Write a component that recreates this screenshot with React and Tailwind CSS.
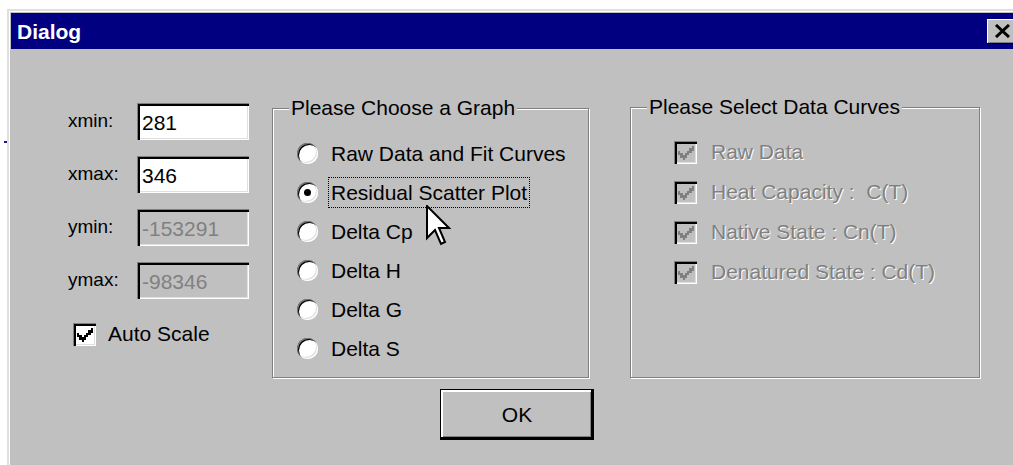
import React from "react";

const sunken =
  "shadow-[inset_1px_1px_0_#808080,inset_3px_3px_0_#000,inset_-1px_-1px_0_#fff,inset_-2px_-2px_0_#dfdfdf]";

const graphs = [
  "Raw Data and Fit Curves",
  "Residual Scatter Plot",
  "Delta Cp",
  "Delta H",
  "Delta G",
  "Delta S",
];

const curves = [
  "Raw Data",
  "Heat Capacity :\u00a0\u00a0C(T)",
  "Native State : Cn(T)",
  "Denatured State : Cd(T)",
];

const ranges = [
  { label: "xmin:", value: "281", disabled: false },
  { label: "xmax:", value: "346", disabled: false },
  { label: "ymin:", value: "-153291", disabled: true },
  { label: "ymax:", value: "-98346", disabled: true },
];

const Check = ({ color }) => (
  <svg width="16" height="14" viewBox="0 0 7 6" shapeRendering="crispEdges">
    <path d="M0 2h1v1h1v1h1V3h1V2h1V1h1V0h1v2H6v1H5v1H4v1H3v1H2V5H1V4H0z" fill={color} />
  </svg>
);

const Checkbox = ({ disabled }) => (
  <div
    className={`w-[23px] h-[23px] shrink-0 flex items-center justify-center pl-[1px] pt-[1px] ${sunken} ${
      disabled ? "bg-[#c0c0c0]" : "bg-white"
    }`}
  >
    <Check color={disabled ? "#808080" : "#000"} />
  </div>
);

const Radio = ({ checked }) => (
  <div className="w-[21px] h-[21px] shrink-0 rounded-full bg-white flex items-center justify-center shadow-[inset_1px_1px_0_#808080,inset_2px_2px_0_#000,inset_-1px_-1px_0_#fff,inset_-2px_-2px_0_#dfdfdf]">
    {checked && <div className="w-[7px] h-[7px] rounded-full bg-black" />}
  </div>
);

const GroupBox = ({ title, className, children }) => (
  <div
    className={`relative border border-[#808080] shadow-[inset_1px_1px_0_#fff,1px_1px_0_#fff] ${className}`}
  >
    <span className="absolute left-[16px] top-[-13px] leading-[24px] bg-[#c0c0c0] px-[2px] text-black">
      {title}
    </span>
    {children}
  </div>
);

export default function App() {
  return (
    <div
      className="relative w-[1013px] h-[465px] overflow-hidden bg-white text-[21px]"
      style={{ fontFamily: '"Liberation Sans", Arial, sans-serif' }}
    >
      <div className="absolute left-[4px] top-[141px] w-[3px] h-[2px] bg-[#1a1a80]" />

      <div className="ml-[7px] mt-[9px] w-[1010px] h-[456px] bg-[#c0c0c0] pl-[4px] pt-[4px] shadow-[inset_2px_2px_0_#dfdfdf,inset_3px_3px_0_#fff]">
        {/* title bar */}
        <div className="h-[36px] bg-[#000080] flex items-center justify-between pl-[6px]">
          <span className="text-white font-bold leading-none">Dialog</span>
          <button className="w-[30px] h-[25px] bg-[#c0c0c0] flex items-center justify-center shadow-[inset_-1px_-1px_0_#000,inset_1px_1px_0_#fff,inset_-2px_-2px_0_#808080]">
            <svg width="17" height="14" viewBox="0 0 17 14">
              <path d="M2 1l13 12M15 1L2 13" stroke="#000" strokeWidth="3" />
            </svg>
          </button>
        </div>

        <div className="flex flex-col">
          <div className="flex items-start">
            {/* range fields */}
            <div className="ml-[57px] mt-[54px] flex flex-col">
              <div className="grid grid-cols-[69px_112px] gap-y-[16px]">
                {ranges.map((r) => (
                  <React.Fragment key={r.label}>
                    <div className="h-[37px] flex items-center text-black text-[19px]">{r.label}</div>
                    <div
                      className={`h-[37px] flex items-center pl-[5px] pt-[2px] ${sunken} ${
                        r.disabled ? "bg-[#c0c0c0] text-[#808080]" : "bg-white text-black"
                      }`}
                    >
                      {r.value}
                    </div>
                  </React.Fragment>
                ))}
              </div>
              <div className="mt-[16px] h-[38px] flex items-center pl-[5px] gap-[12px] text-black">
                <Checkbox />
                <span>Auto Scale</span>
              </div>
            </div>

            {/* graph choice */}
            <GroupBox
              title="Please Choose a Graph"
              className="ml-[23px] mt-[59px] w-[317px] h-[270px] pt-[25px] pl-[24px]"
            >
              {graphs.map((g, i) => (
                <div key={g} className="h-[39px] flex items-center gap-[10px] text-black">
                  <Radio checked={i === 1} />
                  <span
                    className={`px-[2px] h-[31px] flex items-center border ${
                      i === 1 ? "border-dotted border-black" : "border-transparent"
                    }`}
                  >
                    {g}
                  </span>
                </div>
              ))}
            </GroupBox>

            {/* data curves */}
            <GroupBox
              title="Please Select Data Curves"
              className="ml-[41px] mt-[58px] w-[350px] h-[271px] pt-[24px] pl-[43px]"
            >
              {curves.map((c) => (
                <div key={c} className="h-[40px] flex items-center gap-[14px]">
                  <Checkbox disabled />
                  <span className="text-[#808080] [text-shadow:1px_1px_0_#fff]">{c}</span>
                </div>
              ))}
            </GroupBox>
          </div>

          <button className="ml-[429px] mt-[11px] w-[154px] h-[51px] bg-[#c0c0c0] border border-black text-black shadow-[inset_-2px_-2px_0_#000,inset_2px_2px_0_#fff,inset_-3px_-3px_0_#808080]">
            OK
          </button>
        </div>
      </div>

      {/* mouse pointer */}
      <svg
        className="absolute left-[426px] top-[205px]"
        width="26"
        height="42"
        viewBox="-0.5 -0.5 13 21"
      >
        <path
          d="M0 0L0 16L4 12L7 19L9 18L6 11L11 11Z"
          fill="#fff"
          stroke="#000"
          strokeWidth="1"
          strokeLinejoin="miter"
        />
      </svg>
    </div>
  );
}
